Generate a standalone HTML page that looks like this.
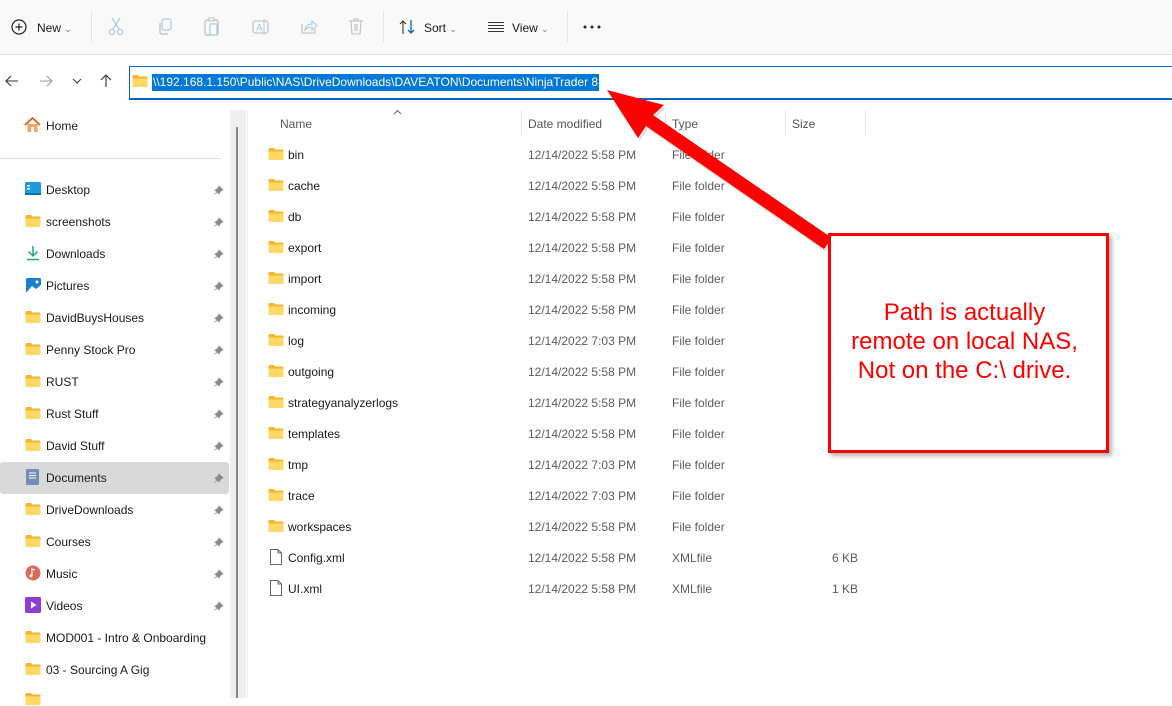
<!DOCTYPE html>
<html><head><meta charset="utf-8"><style>
*{margin:0;padding:0;box-sizing:border-box}
body{width:1172px;height:698px;overflow:hidden;background:#fff;font-family:"Liberation Sans",sans-serif;font-size:12px;color:#1a1a1a;position:relative}
.a{position:absolute;white-space:nowrap}
.tb{position:absolute;left:0;top:0;width:1172px;height:55px;background:#f9f9f9;border-bottom:1px solid #e0e0e0}
.sep{position:absolute;top:12px;width:1px;height:30px;background:#e2e2e2}
.g{color:#555}
.side{font-size:12px}
.pin{position:absolute;left:214px;width:10px;height:10px}
.row{position:absolute;left:268px;height:20px;width:620px;font-size:12px;white-space:nowrap}
.row span{white-space:nowrap}
.row .n{position:absolute;left:20px;top:3px}
.row .d{position:absolute;left:260px;top:3px;color:#5c5c5c}
.row .t{position:absolute;left:404px;top:3px;color:#5c5c5c}
.row .s{position:absolute;left:540px;top:3px;color:#5c5c5c;width:50px;text-align:right}
</style></head><body>
<svg width="0" height="0" style="position:absolute"><defs>
<symbol id="fold" viewBox="0 0 16 14"><path d="M0.5 2 Q0.5 1 1.5 1 H6 L7.5 2.5 H14.5 Q15.5 2.5 15.5 3.5 V12 Q15.5 13 14.5 13 H1.5 Q0.5 13 0.5 12Z" fill="#f3b72b"/><path d="M0.5 4.5 H15.5 V12 Q15.5 13 14.5 13 H1.5 Q0.5 13 0.5 12Z" fill="#ffd865"/></symbol>
<symbol id="pin" viewBox="0 0 10 10"><path d="M5 1 L9 5 L7.5 5.5 L5.5 7.5 L5 9 L1 5 L2.5 4.5 L4.5 2.5Z M3 7 L0.5 9.5" fill="#8a8a8a" stroke="#8a8a8a" stroke-width="0.8"/></symbol>
<symbol id="file" viewBox="0 0 12 16"><path d="M0.5 0.5 H8 L11.5 4 V15.5 H0.5Z M8 0.5 V4 H11.5" fill="#fff" stroke="#666" stroke-width="1"/></symbol>
</defs></svg>

<div class="tb">
<svg class="a" style="left:11px;top:19px" width="16" height="16"><circle cx="8" cy="8" r="7" fill="none" stroke="#222" stroke-width="1.2"/><path d="M8 4.5V11.5M4.5 8H11.5" stroke="#222" stroke-width="1.2"/></svg>
<div class="a" style="left:37px;top:21px;font-size:12px">New <span style="color:#777;font-size:9px">&#8964;</span></div>
<div class="sep" style="left:91px"></div>
<svg class="a" style="left:108px;top:17px" width="16" height="20"><path d="M4 1L11 12M12 1L5 12" stroke="#a9c9e6" stroke-width="1.2" fill="none"/><circle cx="4" cy="15" r="2.6" fill="none" stroke="#a9c9e6" stroke-width="1.2"/><circle cx="12" cy="15" r="2.6" fill="none" stroke="#a9c9e6" stroke-width="1.2"/></svg>
<svg class="a" style="left:157px;top:18px" width="16" height="18"><rect x="5" y="1" width="9" height="11" rx="2" fill="none" stroke="#a9c9e6" stroke-width="1.2"/><path d="M3 5V14Q3 16 5 16H11" fill="none" stroke="#b8b8b8" stroke-width="1.2"/></svg>
<svg class="a" style="left:204px;top:17px" width="16" height="20"><rect x="1" y="3" width="13" height="15" rx="2" fill="none" stroke="#bcbcbc" stroke-width="1.2"/><rect x="5" y="1" width="5" height="3" fill="#fff" stroke="#bcbcbc"/><rect x="6" y="7" width="7" height="11" rx="1" fill="#fff" stroke="#a9c9e6" stroke-width="1.2"/></svg>
<svg class="a" style="left:252px;top:18px" width="18" height="18"><rect x="1" y="3" width="15" height="12" rx="2" fill="none" stroke="#bcbcbc" stroke-width="1.1"/><text x="4" y="13" font-size="10" fill="#a9c9e6" font-family="Liberation Sans">A</text><path d="M12 1V17" stroke="#a9c9e6"/></svg>
<svg class="a" style="left:300px;top:18px" width="18" height="18"><path d="M2 6V15H15V11" fill="none" stroke="#bcbcbc" stroke-width="1.1"/><path d="M5 12Q6 6 12 6V3L17 7.5L12 12V9Q8 9 5 12Z" fill="none" stroke="#a9c9e6" stroke-width="1.1"/></svg>
<svg class="a" style="left:348px;top:18px" width="16" height="18"><path d="M1 3H15M6 3V1H10V3M3 3L4 16H12L13 3M7 6V13M9 6V13" fill="none" stroke="#bcbcbc" stroke-width="1.1"/></svg>
<div class="sep" style="left:383px"></div>
<svg class="a" style="left:399px;top:19px" width="18" height="16"><path d="M4 15V2M1 5L4 2L7 5" fill="none" stroke="#333" stroke-width="1.1"/><path d="M12 1V14M9 11L12 14L15 11" fill="none" stroke="#0067c0" stroke-width="1.3"/></svg>
<div class="a" style="left:424px;top:21px">Sort <span style="color:#777;font-size:9px">&#8964;</span></div>
<svg class="a" style="left:488px;top:21px" width="16" height="12"><path d="M0 1.5H16M0 4.5H16M0 7.5H16M0 10.5H16" stroke="#333" stroke-width="1"/></svg>
<div class="a" style="left:512px;top:21px">View <span style="color:#777;font-size:9px">&#8964;</span></div>
<div class="sep" style="left:567px"></div>
<svg class="a" style="left:583px;top:25px" width="18" height="4"><circle cx="2" cy="2" r="1.5" fill="#222"/><circle cx="9" cy="2" r="1.5" fill="#222"/><circle cx="16" cy="2" r="1.5" fill="#222"/></svg>
</div>

<!-- nav -->
<svg class="a" style="left:5px;top:74px" width="14" height="14"><path d="M13 7H1M6 2L1 7L6 12" fill="none" stroke="#333" stroke-width="1.1"/></svg>
<svg class="a" style="left:39px;top:74px" width="14" height="14"><path d="M1 7H13M8 2L13 7L8 12" fill="none" stroke="#9a9a9a" stroke-width="1.1"/></svg>
<svg class="a" style="left:72px;top:78px" width="10" height="6"><path d="M1 1L5 5L9 1" fill="none" stroke="#333" stroke-width="1"/></svg>
<svg class="a" style="left:99px;top:74px" width="14" height="14"><path d="M7 13V1M2 6L7 1L12 6" fill="none" stroke="#333" stroke-width="1.1"/></svg>
<div class="a" style="left:129px;top:66px;width:1043px;height:34px;border:1px solid #0067c0;border-bottom:2px solid #0067c0;border-right:none;background:#fff"></div>
<svg class="a" style="left:132px;top:74px" width="16" height="14"><use href="#fold"/></svg>
<div class="a" style="left:152px;top:74px;background:#0078d7;color:#fff;font-size:12px;height:17px;line-height:17px;padding:0 1px">\\192.168.1.150\Public\NAS\DriveDownloads\DAVEATON\Documents\NinjaTrader 8</div>

<!-- sidebar -->
<svg class="a" style="left:24px;top:117px" width="17" height="16"><path d="M1 8L8.5 1L16 8" fill="none" stroke="#e06a2b" stroke-width="2"/><path d="M3.5 7V15H13.5V7" fill="#f4a261"/><rect x="7" y="10" width="3" height="5" fill="#fff"/></svg>
<div class="a side" style="left:46px;top:119px">Home</div>
<div class="a" style="left:0;top:158px;width:221px;height:1px;background:#dcdcdc"></div>
<div class="a" style="left:0;top:462px;width:229px;height:32px;background:#d9d9d9;border-radius:3px"></div>
<div class="a" style="left:230px;top:110px;width:16px;height:588px;background:#efefef"></div>
<div class="a" style="left:236px;top:127px;width:2px;height:571px;background:#868686"></div>
<div class="a" style="left:247px;top:110px;width:1px;height:588px;background:#f0f0f0"></div>

<svg class="a" style="left:25px;top:182px" width="16" height="14"><rect x="0" y="0" width="16" height="13" rx="1.5" fill="#1e9be0"/><rect x="2" y="3" width="3" height="1.5" fill="#fff"/><rect x="2" y="6" width="3" height="1.5" fill="#fff"/><rect x="0" y="11" width="16" height="2" fill="#0a6db0"/></svg>
<div class="a side" style="left:46px;top:183px">Desktop</div>
<svg class="a pin" style="top:185px"><use href="#pin"/></svg>
<svg class="a" style="left:25px;top:214px" width="16" height="14"><use href="#fold"/></svg>
<div class="a side" style="left:46px;top:215px">screenshots</div>
<svg class="a pin" style="top:217px"><use href="#pin"/></svg>
<svg class="a" style="left:26px;top:245px" width="14" height="16"><path d="M7 1V11M2.5 6.5L7 11L11.5 6.5" fill="none" stroke="#1fa589" stroke-width="1.5"/><path d="M1 14.5H13" stroke="#1fa589" stroke-width="1.5"/></svg>
<div class="a side" style="left:46px;top:247px">Downloads</div>
<svg class="a pin" style="top:249px"><use href="#pin"/></svg>
<svg class="a" style="left:26px;top:278px" width="15" height="15"><rect width="15" height="15" rx="1.5" fill="#1a7fd6"/><path d="M0 15L6 8L10 11L15 7V15Z" fill="#fff"/><circle cx="11" cy="4" r="1.5" fill="#fff"/></svg>
<div class="a side" style="left:46px;top:279px">Pictures</div>
<svg class="a pin" style="top:281px"><use href="#pin"/></svg>
<svg class="a" style="left:25px;top:310px" width="16" height="14"><use href="#fold"/></svg>
<div class="a side" style="left:46px;top:311px">DavidBuysHouses</div>
<svg class="a pin" style="top:313px"><use href="#pin"/></svg>
<svg class="a" style="left:25px;top:342px" width="16" height="14"><use href="#fold"/></svg>
<div class="a side" style="left:46px;top:343px">Penny Stock Pro</div>
<svg class="a pin" style="top:345px"><use href="#pin"/></svg>
<svg class="a" style="left:25px;top:374px" width="16" height="14"><use href="#fold"/></svg>
<div class="a side" style="left:46px;top:375px">RUST</div>
<svg class="a pin" style="top:377px"><use href="#pin"/></svg>
<svg class="a" style="left:25px;top:406px" width="16" height="14"><use href="#fold"/></svg>
<div class="a side" style="left:46px;top:407px">Rust Stuff</div>
<svg class="a pin" style="top:409px"><use href="#pin"/></svg>
<svg class="a" style="left:25px;top:438px" width="16" height="14"><use href="#fold"/></svg>
<div class="a side" style="left:46px;top:439px">David Stuff</div>
<svg class="a pin" style="top:441px"><use href="#pin"/></svg>
<svg class="a" style="left:26px;top:469px" width="13" height="16"><rect width="13" height="16" rx="1" fill="#6f8fb8"/><path d="M3 4H10M3 6.5H10M3 9H10" stroke="#fff"/></svg>
<div class="a side" style="left:46px;top:471px">Documents</div>
<svg class="a pin" style="top:473px"><use href="#pin"/></svg>
<svg class="a" style="left:25px;top:502px" width="16" height="14"><use href="#fold"/></svg>
<div class="a side" style="left:46px;top:503px">DriveDownloads</div>
<svg class="a pin" style="top:505px"><use href="#pin"/></svg>
<svg class="a" style="left:25px;top:534px" width="16" height="14"><use href="#fold"/></svg>
<div class="a side" style="left:46px;top:535px">Courses</div>
<svg class="a pin" style="top:537px"><use href="#pin"/></svg>
<svg class="a" style="left:25px;top:565px" width="16" height="16"><circle cx="8" cy="8" r="7.5" fill="#d96a5c"/><path d="M7 11V4L10 5" fill="none" stroke="#fff" stroke-width="1.2"/><circle cx="6" cy="11" r="1.5" fill="#fff"/></svg>
<div class="a side" style="left:46px;top:567px">Music</div>
<svg class="a pin" style="top:569px"><use href="#pin"/></svg>
<svg class="a" style="left:25px;top:597px" width="16" height="16"><rect width="16" height="16" rx="1.5" fill="#8a3fd1"/><path d="M6 4.5V11.5L11.5 8Z" fill="#fff"/></svg>
<div class="a side" style="left:46px;top:599px">Videos</div>
<svg class="a pin" style="top:601px"><use href="#pin"/></svg>
<svg class="a" style="left:25px;top:630px" width="16" height="14"><use href="#fold"/></svg>
<div class="a side" style="left:46px;top:631px">MOD001 - Intro &amp; Onboarding</div>
<svg class="a" style="left:25px;top:662px" width="16" height="14"><use href="#fold"/></svg>
<div class="a side" style="left:46px;top:663px">03 - Sourcing A Gig</div>
<svg class="a" style="left:25px;top:692px" width="16" height="14"><use href="#fold"/></svg>

<!-- headers -->
<svg class="a" style="left:393px;top:109px" width="9" height="6"><path d="M1 5L4.5 1.5L8 5" fill="none" stroke="#666"/></svg>
<div class="a g" style="left:280px;top:117px">Name</div>
<div class="a" style="left:521px;top:110px;width:1px;height:24px;background:#e5e5e5"></div>
<div class="a g" style="left:528px;top:117px">Date modified</div>
<div class="a" style="left:665px;top:110px;width:1px;height:24px;background:#e5e5e5"></div>
<div class="a g" style="left:672px;top:117px">Type</div>
<div class="a" style="left:785px;top:110px;width:1px;height:24px;background:#e5e5e5"></div>
<div class="a g" style="left:792px;top:117px">Size</div>
<div class="a" style="left:865px;top:110px;width:1px;height:24px;background:#e5e5e5"></div>

<!-- rows -->
<div class="row" style="top:145px"><svg class="a" style="left:0;top:2px" width="16" height="14"><use href="#fold"/></svg><span class="n">bin</span><span class="d">12/14/2022 5:58 PM</span><span class="t">File folder</span></div>
<div class="row" style="top:176px"><svg class="a" style="left:0;top:2px" width="16" height="14"><use href="#fold"/></svg><span class="n">cache</span><span class="d">12/14/2022 5:58 PM</span><span class="t">File folder</span></div>
<div class="row" style="top:207px"><svg class="a" style="left:0;top:2px" width="16" height="14"><use href="#fold"/></svg><span class="n">db</span><span class="d">12/14/2022 5:58 PM</span><span class="t">File folder</span></div>
<div class="row" style="top:238px"><svg class="a" style="left:0;top:2px" width="16" height="14"><use href="#fold"/></svg><span class="n">export</span><span class="d">12/14/2022 5:58 PM</span><span class="t">File folder</span></div>
<div class="row" style="top:269px"><svg class="a" style="left:0;top:2px" width="16" height="14"><use href="#fold"/></svg><span class="n">import</span><span class="d">12/14/2022 5:58 PM</span><span class="t">File folder</span></div>
<div class="row" style="top:300px"><svg class="a" style="left:0;top:2px" width="16" height="14"><use href="#fold"/></svg><span class="n">incoming</span><span class="d">12/14/2022 5:58 PM</span><span class="t">File folder</span></div>
<div class="row" style="top:331px"><svg class="a" style="left:0;top:2px" width="16" height="14"><use href="#fold"/></svg><span class="n">log</span><span class="d">12/14/2022 7:03 PM</span><span class="t">File folder</span></div>
<div class="row" style="top:362px"><svg class="a" style="left:0;top:2px" width="16" height="14"><use href="#fold"/></svg><span class="n">outgoing</span><span class="d">12/14/2022 5:58 PM</span><span class="t">File folder</span></div>
<div class="row" style="top:393px"><svg class="a" style="left:0;top:2px" width="16" height="14"><use href="#fold"/></svg><span class="n">strategyanalyzerlogs</span><span class="d">12/14/2022 5:58 PM</span><span class="t">File folder</span></div>
<div class="row" style="top:424px"><svg class="a" style="left:0;top:2px" width="16" height="14"><use href="#fold"/></svg><span class="n">templates</span><span class="d">12/14/2022 5:58 PM</span><span class="t">File folder</span></div>
<div class="row" style="top:455px"><svg class="a" style="left:0;top:2px" width="16" height="14"><use href="#fold"/></svg><span class="n">tmp</span><span class="d">12/14/2022 7:03 PM</span><span class="t">File folder</span></div>
<div class="row" style="top:486px"><svg class="a" style="left:0;top:2px" width="16" height="14"><use href="#fold"/></svg><span class="n">trace</span><span class="d">12/14/2022 7:03 PM</span><span class="t">File folder</span></div>
<div class="row" style="top:517px"><svg class="a" style="left:0;top:2px" width="16" height="14"><use href="#fold"/></svg><span class="n">workspaces</span><span class="d">12/14/2022 5:58 PM</span><span class="t">File folder</span></div>
<div class="row" style="top:548px"><svg class="a" style="left:2px;top:1px" width="12" height="16"><use href="#file"/></svg><span class="n">Config.xml</span><span class="d">12/14/2022 5:58 PM</span><span class="t">XMLfile</span><span class="s">6 KB</span></div>
<div class="row" style="top:579px"><svg class="a" style="left:2px;top:1px" width="12" height="16"><use href="#file"/></svg><span class="n">UI.xml</span><span class="d">12/14/2022 5:58 PM</span><span class="t">XMLfile</span><span class="s">1 KB</span></div>

<!-- arrow -->
<svg class="a" style="left:0;top:0" width="1172" height="698">
<polygon points="609,93 666,108 655,118 834,241 826,252 648,129 640,141" fill="#000" opacity="0.12"/>
<polygon points="607,90 664,105 653,115 832,238 824,249 646,126 638,138" fill="#ff0000"/>
</svg>

<!-- callout -->
<div class="a" style="left:828px;top:233px;width:281px;height:220px;border:3px solid #ff0000;background:#fff;box-shadow:3px 3px 4px rgba(0,0,0,0.3)"></div>
<div class="a" style="left:824px;top:298px;width:281px;text-align:center;color:#ff0000;font-size:24px;line-height:29px;white-space:normal">Path is actually<br>remote on local NAS,<br>Not on the C:\ drive.</div>
</body></html>
